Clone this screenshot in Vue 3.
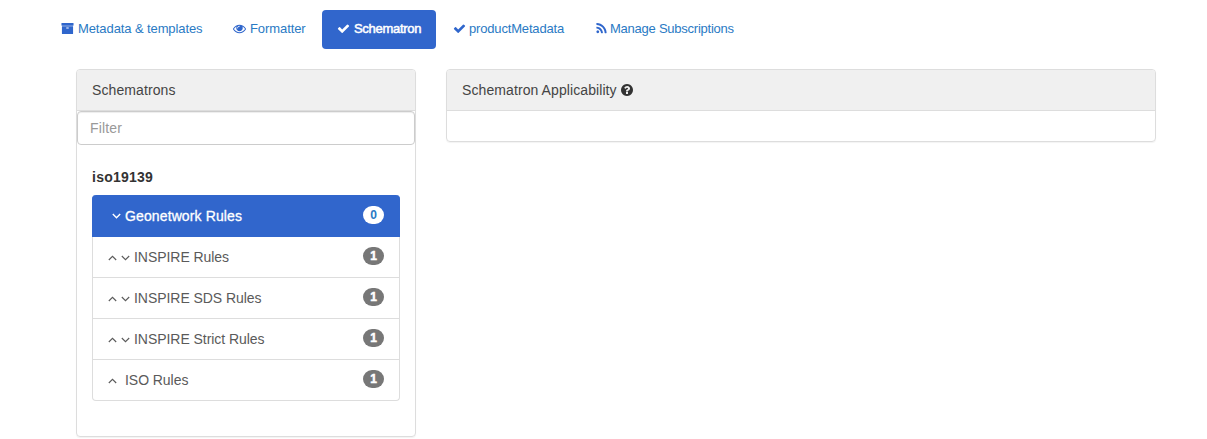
<script setup>
const icons = {
  archive: 'M1088 832q0-26-19-45t-45-19h-256q-26 0-45 19t-19 45 19 45 45 19h256q26 0 45-19t19-45zm576-192v960q0 26-19 45t-45 19h-1408q-26 0-45-19t-19-45v-960q0-26 19-45t45-19h1408q26 0 45 19t19 45zm64-448v256q0 26-19 45t-45 19h-1536q-26 0-45-19t-19-45v-256q0-26 19-45t45-19h1536q26 0 45 19t19 45z',
  eye: 'M1664 960q-152-236-381-353 61 104 61 225 0 185-131.5 316.5t-316.5 131.5-316.5-131.5-131.5-316.5q0-121 61-225-229 117-381 353 133 205 333.5 326.5t434.5 121.5 434.5-121.5 333.5-326.5zm-720-384q0-20-14-34t-34-14q-125 0-214.5 89.5t-89.5 214.5q0 20 14 34t34 14 34-14 14-34q0-86 61-147t147-61q20 0 34-14t14-34zm848 384q0 34-20 69-140 230-376.5 368.5t-499.5 138.5-499.5-139-376.5-368q-20-35-20-69t20-69q140-229 376.5-368t499.5-139 499.5 139 376.5 368q20 35 20 69z',
  check: 'M1671 566q0 40-28 68l-724 724-136 136q-28 28-68 28t-68-28l-136-136-362-362q-28-28-28-68t28-68l136-136q28-28 68-28t68 28l294 295 656-657q28-28 68-28t68 28l136 136q28 28 28 68z',
  rss: 'M576 1344q0 80-56 136t-136 56-136-56-56-136 56-136 136-56 136 56 56 136zm512 123q2 28-17 48-18 21-47 21h-135q-25 0-43-16.5t-20-41.5q-22-229-184.5-391.5t-391.5-184.5q-25-2-41.5-20t-16.5-43v-135q0-29 21-47 17-17 43-17h5q160 13 306 80.5t259 181.5q114 113 181.5 259t80.5 306zm512 2q2 27-18 47-18 20-46 20h-143q-26 0-44.5-17.5t-19.5-42.5q-12-215-101-408.5t-231.5-336-336-231.5-408.5-102q-25-1-42.5-19.5t-17.5-43.5v-143q0-28 20-46 18-18 44-18h3q262 13 501.5 120t425.5 294q187 186 294 425.5t120 501.5z',
  help: 'M1024 1376v-192q0-14-9-23t-23-9h-192q-14 0-23 9t-9 23v192q0 14 9 23t23 9h192q14 0 23-9t9-23zm256-672q0-88-55.5-163t-138.5-116-170-41q-243 0-371 213-15 24 8 42l132 100q7 6 19 6 16 0 25-12 53-68 86-92 34-24 86-24 48 0 85.5 26t37.5 59q0 38-20 61t-68 45q-63 28-115.5 86.5t-52.5 125.5v36q0 14 9 23t23 9h192q14 0 23-9t9-23q0-19 21.5-49.5t54.5-49.5q32-18 49-28.5t46-35 44.5-48 28-60.5 12.5-81zm384 192q0 209-103 385.5t-279.5 279.5-385.5 103-385.5-103-279.5-279.5-103-385.5 103-385.5 279.5-279.5 385.5-103 385.5 103 279.5 279.5 103 385.5z',
}
const tabs = [
  { label: 'Metadata & templates', icon: 'archive', key: 'metadata' },
  { label: 'Formatter', icon: 'eye', key: 'formatter' },
  { label: 'Schematron', icon: 'check', key: 'schematron', active: true },
  { label: 'productMetadata', icon: 'check', key: 'product' },
  { label: 'Manage Subscriptions', icon: 'rss', key: 'subscriptions' },
]
const rules = [
  { name: 'Geonetwork Rules', count: 0, down: true, active: true },
  { name: 'INSPIRE Rules', count: 1, up: true, down: true },
  { name: 'INSPIRE SDS Rules', count: 1, up: true, down: true },
  { name: 'INSPIRE Strict Rules', count: 1, up: true, down: true },
  { name: 'ISO Rules', count: 1, up: true },
]
</script>

<template>
  <div class="page">
    <nav class="tabs">
      <a v-for="t in tabs" :key="t.key" class="tab" :class="[t.key, { active: t.active }]">
        <svg class="tab-icon" viewBox="0 0 1792 1792"><path :d="icons[t.icon]" /></svg>
        <span class="tab-label">{{ t.label }}</span>
      </a>
    </nav>
    <main class="columns">
      <section class="panel list-panel">
        <header class="panel-heading">Schematrons</header>
        <input class="filter" type="text" placeholder="Filter" />
        <div class="panel-body">
          <h4 class="schema">iso19139</h4>
          <ul class="rules">
            <li v-for="r in rules" :key="r.name" class="rule" :class="{ active: r.active }">
              <span class="arrows" :class="{ 'only-down': !r.up, 'only-up': !r.down }">
                <svg v-if="r.up" class="angle up" viewBox="0 0 9 6"><path d="M.8 5 4.5 1.3 8.2 5" /></svg>
                <svg v-if="r.down" class="angle" viewBox="0 0 9 6"><path d="M.8 1 4.5 4.7 8.2 1" /></svg>
              </span>
              <span class="rule-name">{{ r.name }}</span>
              <span class="badge">{{ r.count }}</span>
            </li>
          </ul>
        </div>
      </section>
      <section class="panel detail-panel">
        <header class="panel-heading">
          <span>Schematron Applicability</span>
          <svg class="help" viewBox="0 0 1792 1792"><path :d="icons.help" /></svg>
        </header>
        <div class="detail-body"></div>
      </section>
    </main>
  </div>
</template>

<style>
body {
  background: #fff;
  overflow: hidden;
}
</style>

<style scoped>
.page {
  box-sizing: border-box;
  height: 439px;
  padding: 10px 0 0 46px;
  font-family: "Liberation Sans", Arial, sans-serif;
  font-size: 14px;
  line-height: 20px;
  color: #333;
}
.tabs {
  display: flex;
  gap: 2px;
  height: 39px;
}
.tab {
  box-sizing: border-box;
  display: flex;
  align-items: center;
  padding: 0 0 2px 15px;
  border-radius: 4px;
  font-size: 13px;
  color: #2a7ac4;
  white-space: nowrap;
}
.tab-icon {
  flex: none;
  width: 13px;
  height: 13px;
  margin-right: 3px;
  fill: #2f66cc;
}
.tab.metadata {
  width: 170px;
  letter-spacing: -0.1px;
}
.tab.metadata .tab-icon { margin-right: 4px; }
.tab.formatter {
  width: 102px;
  letter-spacing: -0.08px;
}
.tab.formatter .tab-icon { margin-right: 4px; }
.tab.schematron {
  width: 114px;
  letter-spacing: -0.3px;
}
.tab.schematron .tab-icon { margin-right: 4px; }
.tab.product {
  width: 139px;
  letter-spacing: -0.17px;
}
.tab.subscriptions {
  padding-left: 16px;
  letter-spacing: -0.24px;
}
.tab.subscriptions .tab-icon { margin-right: 2px; }
.tab.active {
  background: #3166cc;
  color: #fff;
  -webkit-text-stroke: 0.5px #fff;
}
.tab.active .tab-icon { fill: #fff; }
.columns {
  display: flex;
  align-items: flex-start;
  gap: 30px;
  padding: 20px 0 0 30px;
}
.panel {
  box-sizing: border-box;
  border: 1px solid #ddd;
  border-radius: 4px;
  box-shadow: 0 1px 1px rgba(0, 0, 0, 0.05);
  overflow: hidden;
}
.list-panel {
  width: 340px;
  height: 368px;
}
.detail-panel { width: 710px; }
.panel-heading {
  display: flex;
  align-items: center;
  padding: 10px 15px;
  border-bottom: 1px solid #ddd;
  background: #f0f0f0;
  color: #444;
  letter-spacing: 0.09px;
}
.help {
  flex: none;
  width: 14px;
  height: 14px;
  margin-left: 3px;
  fill: #333;
}
.detail-body { height: 30px; }
.filter {
  display: block;
  box-sizing: border-box;
  width: 100%;
  height: 34px;
  padding: 6px 12px;
  border: 1px solid #ccc;
  border-radius: 4px;
  background: #fff;
  box-shadow: inset 0 1px 1px rgba(0, 0, 0, 0.075);
  font: inherit;
  letter-spacing: 0.15px;
  outline: none;
}
.filter::placeholder {
  color: #999;
  opacity: 1;
}
.panel-body { padding: 22px 15px 0; }
.schema {
  margin: 0 0 8px;
  font-size: 14px;
  line-height: 20px;
  letter-spacing: 0.25px;
}
.rules {
  margin: 0;
  padding: 0;
  list-style: none;
}
.rule {
  box-sizing: border-box;
  display: flex;
  align-items: center;
  height: 41px;
  padding: 0 15px;
  border: 1px solid #ddd;
  border-top: 0;
  color: #5a5a5a;
  letter-spacing: -0.05px;
}
.rule.active {
  height: 42px;
  border-color: #3166cc;
  border-radius: 4px 4px 0 0;
  background: #3166cc;
  color: #fff;
  letter-spacing: 0.12px;
  -webkit-text-stroke: 0.3px #fff;
}
.rule:last-child { border-radius: 0 0 4px 4px; }
.arrows {
  display: flex;
  gap: 4px;
  margin-right: 4px;
  padding-top: 1px;
}
.arrows.only-down { margin-left: 4px; }
.arrows.only-up { margin-right: 8px; }
.angle {
  width: 9px;
  height: 6px;
  fill: none;
  stroke: currentColor;
  stroke-width: 1.1;
}
.rule.active .angle { stroke-width: 1.4; }
.rule-name { flex: 1; }
.badge {
  box-sizing: border-box;
  min-width: 21px;
  height: 18px;
  margin-bottom: 2px;
  border-radius: 10px;
  background: #777;
  color: #fff;
  font-size: 12px;
  font-weight: 700;
  line-height: 18px;
  text-align: center;
  -webkit-text-stroke: 0.5px #fff;
}
.rule.active .badge {
  background: #fff;
  color: #2a7ac4;
  letter-spacing: 0;
  -webkit-text-stroke: 0;
}
</style>
